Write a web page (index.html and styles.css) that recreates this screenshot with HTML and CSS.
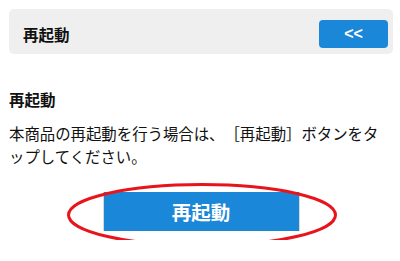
FILE: index.html
```html
<!DOCTYPE html>
<html lang="ja">
<head>
    <meta charset="UTF-8">
    <meta name="viewport" content="width=device-width, initial-scale=1.0">
    <title>再起動</title>
    <link rel="stylesheet" href="styles.css">
</head>
<body>
    <div class="header">
        <div class="header-title">再起動</div>
        <button class="back-btn">&lt;&lt;</button>
    </div>

    <div class="content">
        <div class="section-title">再起動</div>
        <p class="description">本商品の再起動を行う場合は、［再起動］ボタンをタップしてください。</p>

        <div class="action">
            <button class="restart-btn">再起動</button>
            <svg class="highlight" width="272" height="66" viewBox="0 0 272 66">
                <ellipse cx="136" cy="33" rx="133.5" ry="30.5" fill="none" stroke="#e8141c" stroke-width="3"/>
            </svg>
        </div>
    </div>
</body>
</html>
```

FILE: styles.css
```css
body {
    font-family: "Noto Sans CJK JP", "Noto Sans", sans-serif;
    margin: 0;
    padding: 9px 7px 9px 9px;
    background: white;
    color: #111;
    text-spacing-trim: space-all;
}
.header {
    background: #efefef;
    border-radius: 5px;
    height: 45px;
    box-sizing: border-box;
    padding: 11px 5px 7px 14px;
    display: flex;
    align-items: center;
    justify-content: space-between;
}
.header-title {
    font-size: 15.5px;
    font-weight: 700;
}
.back-btn {
    width: 69px;
    height: 28px;
    background: #1b87d9;
    color: white;
    border: none;
    border-radius: 4px;
    font-family: "Liberation Sans", sans-serif;
    font-size: 16px;
    font-weight: 700;
    padding: 0;
}
.content {
    padding-top: 34px;
}
.section-title {
    font-size: 15.5px;
    font-weight: 700;
    line-height: 22px;
}
.description {
    font-size: 15.4px;
    line-height: 23px;
    margin: 12px 0 0;
    text-spacing-trim: space-all;
}
.action {
    position: relative;
    display: flex;
    justify-content: center;
    margin-top: 24px;
}
.restart-btn {
    width: 197px;
    height: 39px;
    background: #1b87d9;
    color: white;
    border: none;
    border-left: 1px solid #d8d8d8;
    border-right: 1px solid #d8d8d8;
    font-family: "Noto Sans CJK JP", sans-serif;
    font-size: 19.5px;
    font-weight: 700;
    padding: 0;
}
.highlight {
    position: absolute;
    left: 57px;
    top: -10px;
}
```
